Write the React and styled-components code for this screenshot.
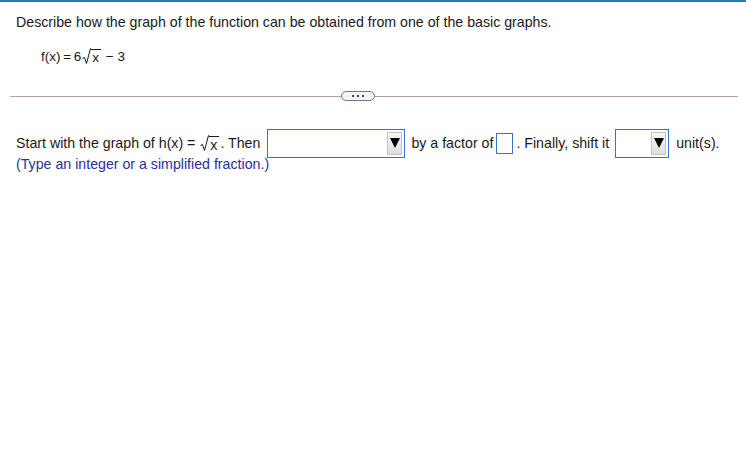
import React from "react";
import styled, { createGlobalStyle } from "styled-components";

const GlobalStyle = createGlobalStyle`
  html, body {
    margin: 0;
    padding: 0;
    background: #ffffff;
  }
  body {
    font-family: "Liberation Sans", Arial, sans-serif;
    font-size: 14.2px;
    color: #1a1a1a;
  }
`;

const Page = styled.div`
  width: 746px;
  height: 457px;
  border-top: 2px solid #1f7fb0;
  box-sizing: border-box;
`;

const Question = styled.div`
  padding: 12px 0 0 16px;
  line-height: 16px;
`;

const Formula = styled.div`
  display: flex;
  align-items: center;
  margin: 17px 0 0 41px;
  height: 18px;
  font-size: 13.5px;
  white-space: pre;
`;

const RadWrap = styled.span`
  display: inline-flex;
  align-items: flex-end;
  margin: 0 1px;
`;

const RadSign = styled.svg`
  width: 9px;
  height: 17px;
  display: block;
`;

const RadBody = styled.span`
  border-top: 1px solid #1a1a1a;
  padding: 1px 2px 0 1px;
  line-height: 14px;
`;

const Divider = styled.div`
  display: flex;
  align-items: center;
  margin: 26px 8px 0 10px;
  height: 10px;
`;

const Line = styled.div`
  height: 1px;
  background: #b7a0a8;
  flex: ${(p) => (p.$grow ? 1 : "none")};
  width: ${(p) => (p.$w ? `${p.$w}px` : "auto")};
`;

const Pill = styled.div`
  width: 34px;
  height: 10px;
  box-sizing: border-box;
  border: 1px solid #6a7785;
  border-radius: 5px;
  background: #f3f4f5;
  display: flex;
  align-items: center;
  justify-content: center;
  gap: 3px;
`;

const Dot = styled.span`
  width: 2px;
  height: 2px;
  background: #3a4552;
`;

const AnswerRow = styled.div`
  display: flex;
  align-items: center;
  margin: 28px 0 0 16px;
  height: 28px;
  white-space: pre;
`;

const Select = styled.div`
  width: ${(p) => p.$w}px;
  height: 29px;
  flex: none;
  box-sizing: border-box;
  border: 1px solid #3d6fce;
  background: #fff;
  display: flex;
  align-items: center;
  justify-content: flex-end;
  padding-right: 2px;
  margin: 0 ${(p) => p.$mr}px 0 ${(p) => p.$ml}px;
`;

const ArrowBtn = styled.div`
  width: 15px;
  height: 23px;
  box-sizing: border-box;
  border: 1px solid #c4c4c4;
  background: linear-gradient(#f7f7f7, #dedede);
  display: flex;
  align-items: center;
  justify-content: center;
`;

const Caret = styled.span`
  width: 0;
  height: 0;
  border-left: 5px solid transparent;
  border-right: 5px solid transparent;
  border-top: 10px solid #000;
`;

const SmallBox = styled.div`
  width: 17px;
  height: 21px;
  flex: none;
  box-sizing: border-box;
  border: 1px solid #3d6fce;
  background: #fff;
  margin: 0 3px 0 3px;
`;

const Hint = styled.div`
  margin: -1px 0 0 16px;
  color: #2e2ea0;
  line-height: 16px;
`;

const Radical = ({ children }) => (
  <RadWrap>
    <RadSign viewBox="0 0 9 17">
      <path d="M0.5 10.5 L2.5 9.5 L4.5 15.5 L8.5 0.5 L9 0.5" fill="none" stroke="#1a1a1a" strokeWidth="1" />
    </RadSign>
    <RadBody>{children}</RadBody>
  </RadWrap>
);

const Dropdown = ({ w, ml, mr }) => (
  <Select $w={w} $ml={ml} $mr={mr}>
    <ArrowBtn>
      <Caret />
    </ArrowBtn>
  </Select>
);

export default function App() {
  return (
    <>
      <GlobalStyle />
      <Page>
        <Question>Describe how the graph of the function can be obtained from one of the basic graphs.</Question>
        <Formula>
          f(x)<span>{"\u2009=\u2009"}</span>6<Radical>x</Radical>{" − 3"}
        </Formula>
        <Divider>
          <Line $w={331} />
          <Pill>
            <Dot />
            <Dot />
            <Dot />
          </Pill>
          <Line $grow />
        </Divider>
        <AnswerRow>
          Start with the graph of h(x) = <Radical>x</Radical>. Then
          <Dropdown w={138} ml={7} mr={6} />
          by a factor of
          <SmallBox />
          . Finally, shift it
          <Dropdown w={54} ml={6} mr={7} />
          unit(s).
        </AnswerRow>
        <Hint>(Type an integer or a simplified fraction.)</Hint>
      </Page>
    </>
  );
}
